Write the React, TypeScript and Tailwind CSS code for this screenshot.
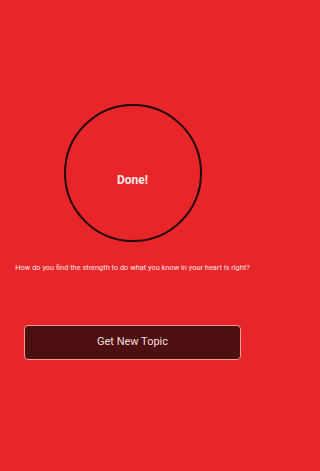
import React from "react";

const App = () => {
  return (
    <div className="min-h-screen w-full bg-[#e8262a] font-['Roboto',sans-serif]">
      <div className="w-[265px] flex flex-col items-center">
        {/* timer circle */}
        <div className="mt-[104px] w-[138px] h-[138px] rounded-full border-[2.5px] border-[#1c0808] flex items-center justify-center">
          <span className="mt-[14px] text-[12px] font-bold text-[#fde8e8]">Done!</span>
        </div>

        {/* topic */}
        <p className="mt-[21px] whitespace-nowrap text-center text-[7.4px] leading-[10px] text-[#fde4e4]">
          How do you find the strength to do what you know in your heart is right?
        </p>

        {/* button */}
        <button className="mt-[52px] w-[217px] h-[35px] rounded-[4px] border-[1.5px] border-[#f49a9a] bg-[#4d1010] text-[11px] text-[#f6dede]">
          Get New Topic
        </button>
      </div>
    </div>
  );
};

export default App;
